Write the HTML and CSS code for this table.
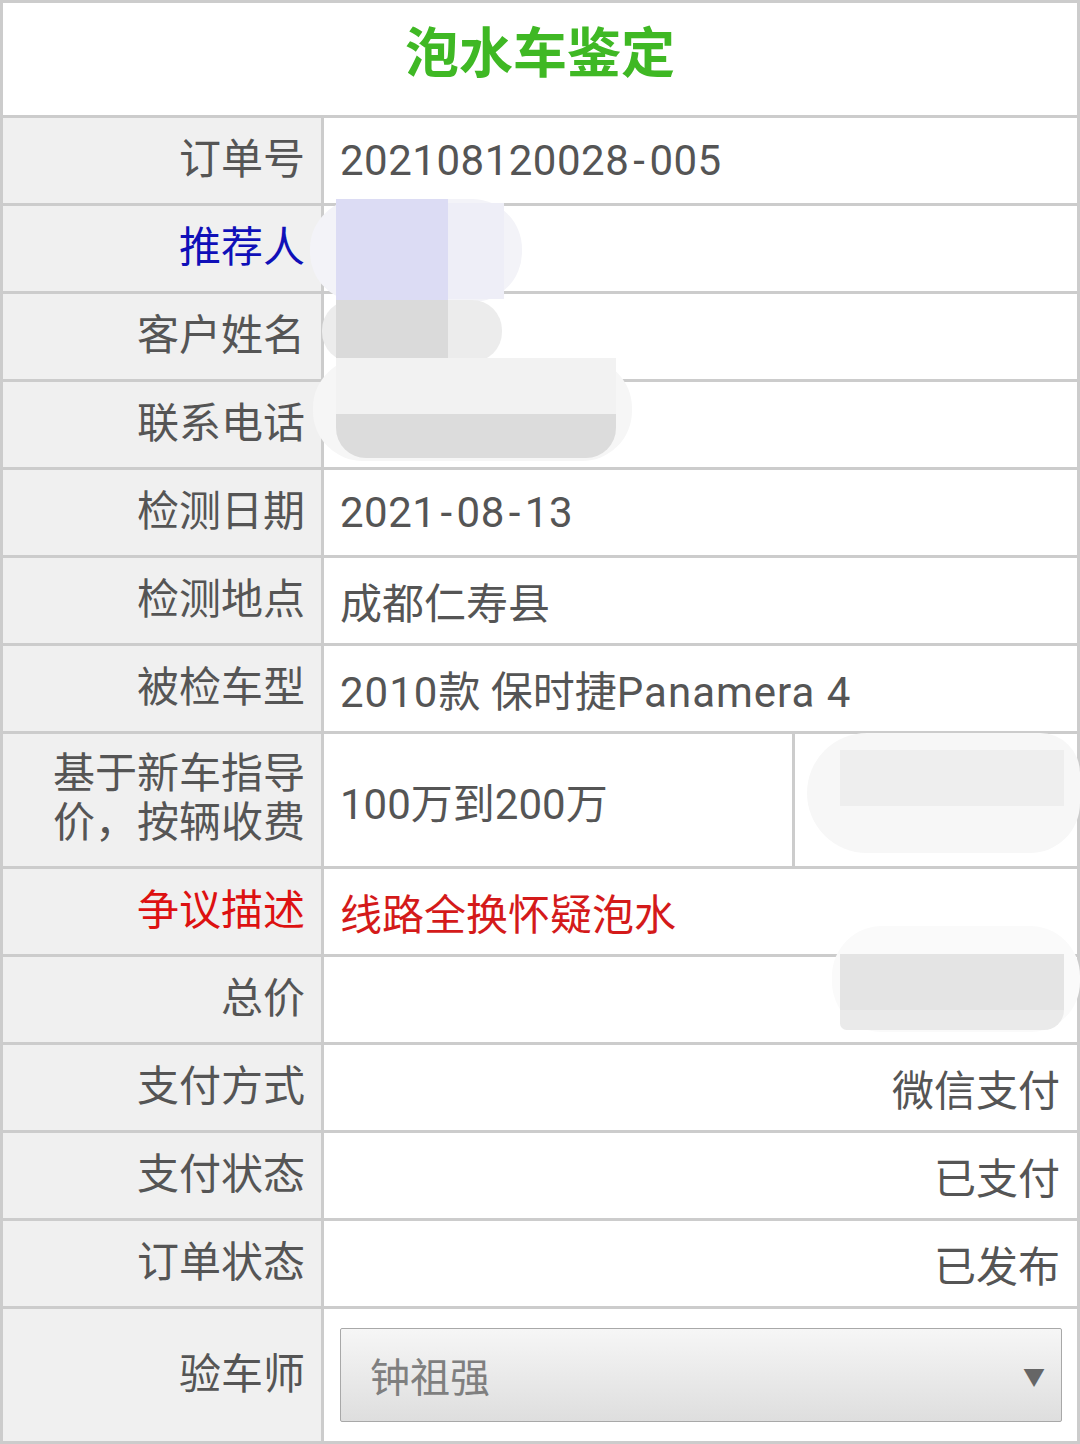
FILE: index.html
```html
<!DOCTYPE html>
<html lang="zh-CN">
<head>
<meta charset="utf-8">
<title>泡水车鉴定</title>
<link rel="stylesheet" href="styles.css">
</head>
<body>
<div class="sheet">
  <div class="title">泡水车鉴定</div>

  <div class="row">
    <div class="label">订单号</div>
    <div class="value"><span class="num">202108120028<span class="dash">-</span>005</span></div>
  </div>
  <div class="row">
    <div class="label blue">推荐人</div>
    <div class="value"></div>
  </div>
  <div class="row">
    <div class="label">客户姓名</div>
    <div class="value"></div>
  </div>
  <div class="row">
    <div class="label">联系电话</div>
    <div class="value"></div>
  </div>
  <div class="row">
    <div class="label">检测日期</div>
    <div class="value"><span class="num">2021<span class="dash">-</span>08<span class="dash">-</span>13</span></div>
  </div>
  <div class="row">
    <div class="label">检测地点</div>
    <div class="value">成都仁寿县</div>
  </div>
  <div class="row">
    <div class="label">被检车型</div>
    <div class="value"><span><span class="latin">2010</span>款 保时捷<span class="latin">Panamera 4</span></span></div>
  </div>
  <div class="row row-tall row-three">
    <div class="label multiline">基于新车指导价，按辆收费</div>
    <div class="value">100万到200万</div>
    <div class="value"></div>
  </div>
  <div class="row">
    <div class="label red">争议描述</div>
    <div class="value red">线路全换怀疑泡水</div>
  </div>
  <div class="row">
    <div class="label">总价</div>
    <div class="value"></div>
  </div>
  <div class="row">
    <div class="label">支付方式</div>
    <div class="value right">微信支付</div>
  </div>
  <div class="row">
    <div class="label">支付状态</div>
    <div class="value right">已支付</div>
  </div>
  <div class="row">
    <div class="label">订单状态</div>
    <div class="value right">已发布</div>
  </div>
  <div class="row row-last">
    <div class="label">验车师</div>
    <div class="value select-cell">
      <div class="select"><span>钟祖强</span><span class="arrow">▼</span></div>
    </div>
  </div>

  <div class="blur blur-referrer"><i class="a"></i><i class="b"></i></div>
  <div class="blur blur-name"><i class="a"></i></div>
  <div class="blur blur-phone"><i class="a"></i><i class="b"></i></div>
  <div class="blur blur-price"><i class="a"></i></div>
  <div class="blur blur-total"><i class="a"></i><i class="b"></i></div>
</div>
</body>
</html>
```

FILE: styles.css
```css
* { box-sizing: border-box; }
html, body { margin: 0; padding: 0; background: #fff; }
body {
  font-family: Roboto, "Noto Sans CJK SC", "Noto Sans", sans-serif;
  color: #555;
}
.sheet {
  position: relative;
  width: 1080px;
  height: 1444px;
  background: #cccccc;
  padding: 3px;
  display: flex;
  flex-direction: column;
  gap: 3px;
  overflow: hidden;
}
.title {
  height: 112px;
  background: #fff;
  display: flex;
  align-items: center;
  justify-content: center;
  font-size: 54px;
  font-weight: 700;
  color: #3fb824;
  padding-bottom: 20px;
}
.row {
  display: grid;
  grid-template-columns: 318px 1fr;
  column-gap: 3px;
  height: 85px;
}
.row-tall { height: 132px; }
.row-three { grid-template-columns: 318px 468px 1fr; }
.row-last { height: 132px; }
.label {
  background: #f0f0f0;
  display: flex;
  align-items: center;
  justify-content: flex-end;
  text-align: right;
  padding: 0 16px 0 26px;
  font-size: 42px;
  color: #555;
  line-height: 1.2;
}
.multiline { line-height: 49px; padding-bottom: 4px; }
.value {
  background: #fff;
  display: flex;
  align-items: center;
  padding: 0 17px 0 16px;
  font-size: 42px;
  color: #555;
}
.num { letter-spacing: 0.5px; }
.dash { margin: 0 4px; }
.latin { letter-spacing: 1px; }
.right { justify-content: flex-end; }
.blue { color: #1010b8; }
.red { color: #dd1111; }
.value.red { color: #d41a1a; }
.select-cell { padding: 0 15px 0 16px; }
.select {
  width: 100%;
  height: 94px;
  border: 1px solid #a8a8a8;
  border-radius: 2px;
  background: linear-gradient(#f6f6f6, #dedede);
  display: flex;
  align-items: center;
  justify-content: space-between;
  padding: 0 16px 0 29px;
  font-size: 40px;
  color: #7f7f7f;
}
.select .arrow { font-size: 22px; color: #666; }

.blur { position: absolute; display: block; }
.blur i { position: absolute; display: block; }
.blur-referrer {
  left: 310px; top: 199px; width: 212px; height: 103px;
  background: #f3f3f8; border-radius: 50px;
}
.blur-referrer .a { left: 26px; top: 0; width: 112px; height: 103px; background: #dcdcf4; }
.blur-referrer .b { left: 138px; top: 4px; width: 56px; height: 96px; background: #eeeef7; }
.blur-name {
  left: 322px; top: 300px; width: 180px; height: 62px;
  background: #ececec; border-radius: 30px;
}
.blur-name .a { left: 14px; top: 0; width: 112px; height: 58px; background: #dadada; }
.blur-phone {
  left: 313px; top: 358px; width: 319px; height: 103px;
  background: #f6f6f6; border-radius: 50px;
}
.blur-phone .a { left: 23px; top: 0; width: 280px; height: 56px; background: #f2f2f2; }
.blur-phone .b { left: 23px; top: 56px; width: 280px; height: 44px; background: #dcdcdc; border-radius: 0 0 30px 30px; }
.blur-price {
  left: 807px; top: 733px; width: 273px; height: 120px;
  background: #f7f7f7; border-radius: 60px 40px 50px 60px;
}
.blur-price .a { left: 33px; top: 17px; width: 224px; height: 56px; background: #eeeeee; }
.blur-total {
  left: 832px; top: 926px; width: 248px; height: 106px;
  background: #fafafa; border-radius: 50px;
}
.blur-total .a { left: 8px; top: 28px; width: 224px; height: 56px; background: #e4e4e4; }
.blur-total .b { left: 8px; top: 84px; width: 224px; height: 20px; background: #eaeaea; border-radius: 0 0 30px 10px; }
```
